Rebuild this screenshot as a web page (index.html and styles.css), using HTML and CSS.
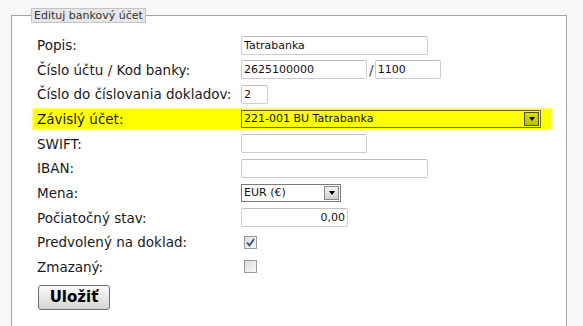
FILE: index.html
```html
<!DOCTYPE html>
<html lang="sk">
<head>
    <meta charset="UTF-8">
    <title>Editovať bankový účet</title>
    <link rel="stylesheet" href="styles.css">
</head>
<body>
    <form class="account-form">
        <fieldset class="box">
            <legend>Edituj bankový účet</legend>
            <div class="rows">
                <div class="row">
                    <label>Popis:</label>
                    <div class="field"><input type="text" class="txt w-long" value="Tatrabanka"></div>
                </div>
                <div class="row">
                    <label>Číslo účtu / Kod banky:</label>
                    <div class="field">
                        <input type="text" class="txt w-acc" value="2625100000">
                        <span class="slash">/</span>
                        <input type="text" class="txt w-bank" value="1100">
                    </div>
                </div>
                <div class="row">
                    <label>Číslo do číslovania dokladov:</label>
                    <div class="field"><input type="text" class="txt w-num" value="2"></div>
                </div>
                <div class="row marked">
                    <label>Závislý účet:</label>
                    <div class="field">
                        <div class="select w-full">
                            <span>221-001 BU Tatrabanka</span>
                            <span class="arrow"></span>
                        </div>
                    </div>
                </div>
                <div class="row">
                    <label>SWIFT:</label>
                    <div class="field"><input type="text" class="txt w-acc" value=""></div>
                </div>
                <div class="row">
                    <label>IBAN:</label>
                    <div class="field"><input type="text" class="txt w-long" value=""></div>
                </div>
                <div class="row">
                    <label>Mena:</label>
                    <div class="field">
                        <div class="select w-cur">
                            <span>EUR (€)</span>
                            <span class="arrow"></span>
                        </div>
                    </div>
                </div>
                <div class="row">
                    <label>Počiatočný stav:</label>
                    <div class="field"><input type="text" class="txt w-sum num" value="0,00"></div>
                </div>
                <div class="row">
                    <label>Predvolený na doklad:</label>
                    <div class="field"><span class="check checked"><svg width="9" height="9" viewBox="0 0 9 9"><path d="M1 4.5 L3.5 7.5 L8 1" fill="none" stroke="#3b4a8c" stroke-width="1.8"/></svg></span></div>
                </div>
                <div class="row">
                    <label>Zmazaný:</label>
                    <div class="field"><span class="check"></span></div>
                </div>
            </div>
            <button type="button" class="btn">Uložiť</button>
        </fieldset>
    </form>
</body>
</html>
```

FILE: styles.css
```css
body {
    background: #f7f7f7;
    margin: 8px 16px 0 11px;
    font-family: Verdana, "DejaVu Sans", sans-serif;
    color: #1a1a1a;
}
.box {
    background: #fff;
    border: 1px solid #a5a5a5;
    margin: 0;
    padding: 12px 15px 30px 25px;
}
.box legend {
    background: #e6e6e6;
    border: 1px solid #c4c4c4;
    color: #333;
    font-size: 11px;
    line-height: 13px;
    padding: 0 2px;
    margin-left: -6px;
}
.rows {
    display: flex;
    flex-direction: column;
    gap: 4.67px;
}
.row {
    display: grid;
    grid-template-columns: 204px 1fr;
    align-items: center;
    height: 20px;
    font-size: 13.5px;
}
.row.marked {
    background: #ffff00;
    margin-left: -4px;
    padding-left: 4px;
    box-shadow: 0 0 2px 1px #ffff4a;
}
.field {
    display: flex;
    align-items: center;
}
.txt {
    font-family: Verdana, "DejaVu Sans", sans-serif;
    font-size: 11px;
    height: 19px;
    box-sizing: border-box;
    border: 1px solid #cdcdcd;
    border-top-color: #bdbdbd;
    border-radius: 2px;
    padding: 0 2px;
    margin: 0;
    color: #111;
    background: #fff;
}
.txt.num {
    text-align: right;
}
.w-long { width: 187px; }
.w-acc { width: 126px; }
.w-bank { width: 66px; }
.w-num { width: 27px; }
.w-sum { width: 107px; }
.slash {
    font-size: 14px;
    color: #444;
    margin: 0 1px 0 2px;
}
.select {
    display: flex;
    align-items: center;
    justify-content: space-between;
    box-sizing: border-box;
    height: 18px;
    border: 1px solid #7b7b7b;
    font-size: 11px;
    padding: 0 1px 0 2px;
    color: #111;
    background: #fff;
}
.w-full { width: 300px; }
.w-cur { width: 100px; }
.select .arrow {
    width: 15px;
    height: 14px;
    box-sizing: border-box;
    border: 1px solid #8a8a8a;
    background: linear-gradient(#f2f2f2, #cfcfcf);
    display: flex;
    align-items: center;
    justify-content: center;
}
.select .arrow::after {
    content: "";
    border-left: 3.5px solid transparent;
    border-right: 3.5px solid transparent;
    border-top: 4px solid #000;
}
.marked .select {
    background: transparent;
    border-color: #6b6b1a;
}
.marked .select .arrow {
    border-color: #4f5000;
    background: linear-gradient(#d8e000, #b6be00);
}
.check {
    width: 13px;
    height: 13px;
    box-sizing: border-box;
    border: 1px solid #9a9a9a;
    background: linear-gradient(135deg, #dcdcdc, #f8f8f8);
    margin-left: 3px;
    display: flex;
    align-items: center;
    justify-content: center;
}
.btn {
    margin-top: 8px;
    margin-left: 1px;
    width: 72px;
    height: 25px;
    font-family: Verdana, "DejaVu Sans", sans-serif;
    font-weight: bold;
    font-size: 15px;
    color: #000;
    border: 1px solid #6f6f6f;
    border-radius: 3px;
    background: linear-gradient(#fafafa, #d4d4d4);
    padding: 0;
}
```
